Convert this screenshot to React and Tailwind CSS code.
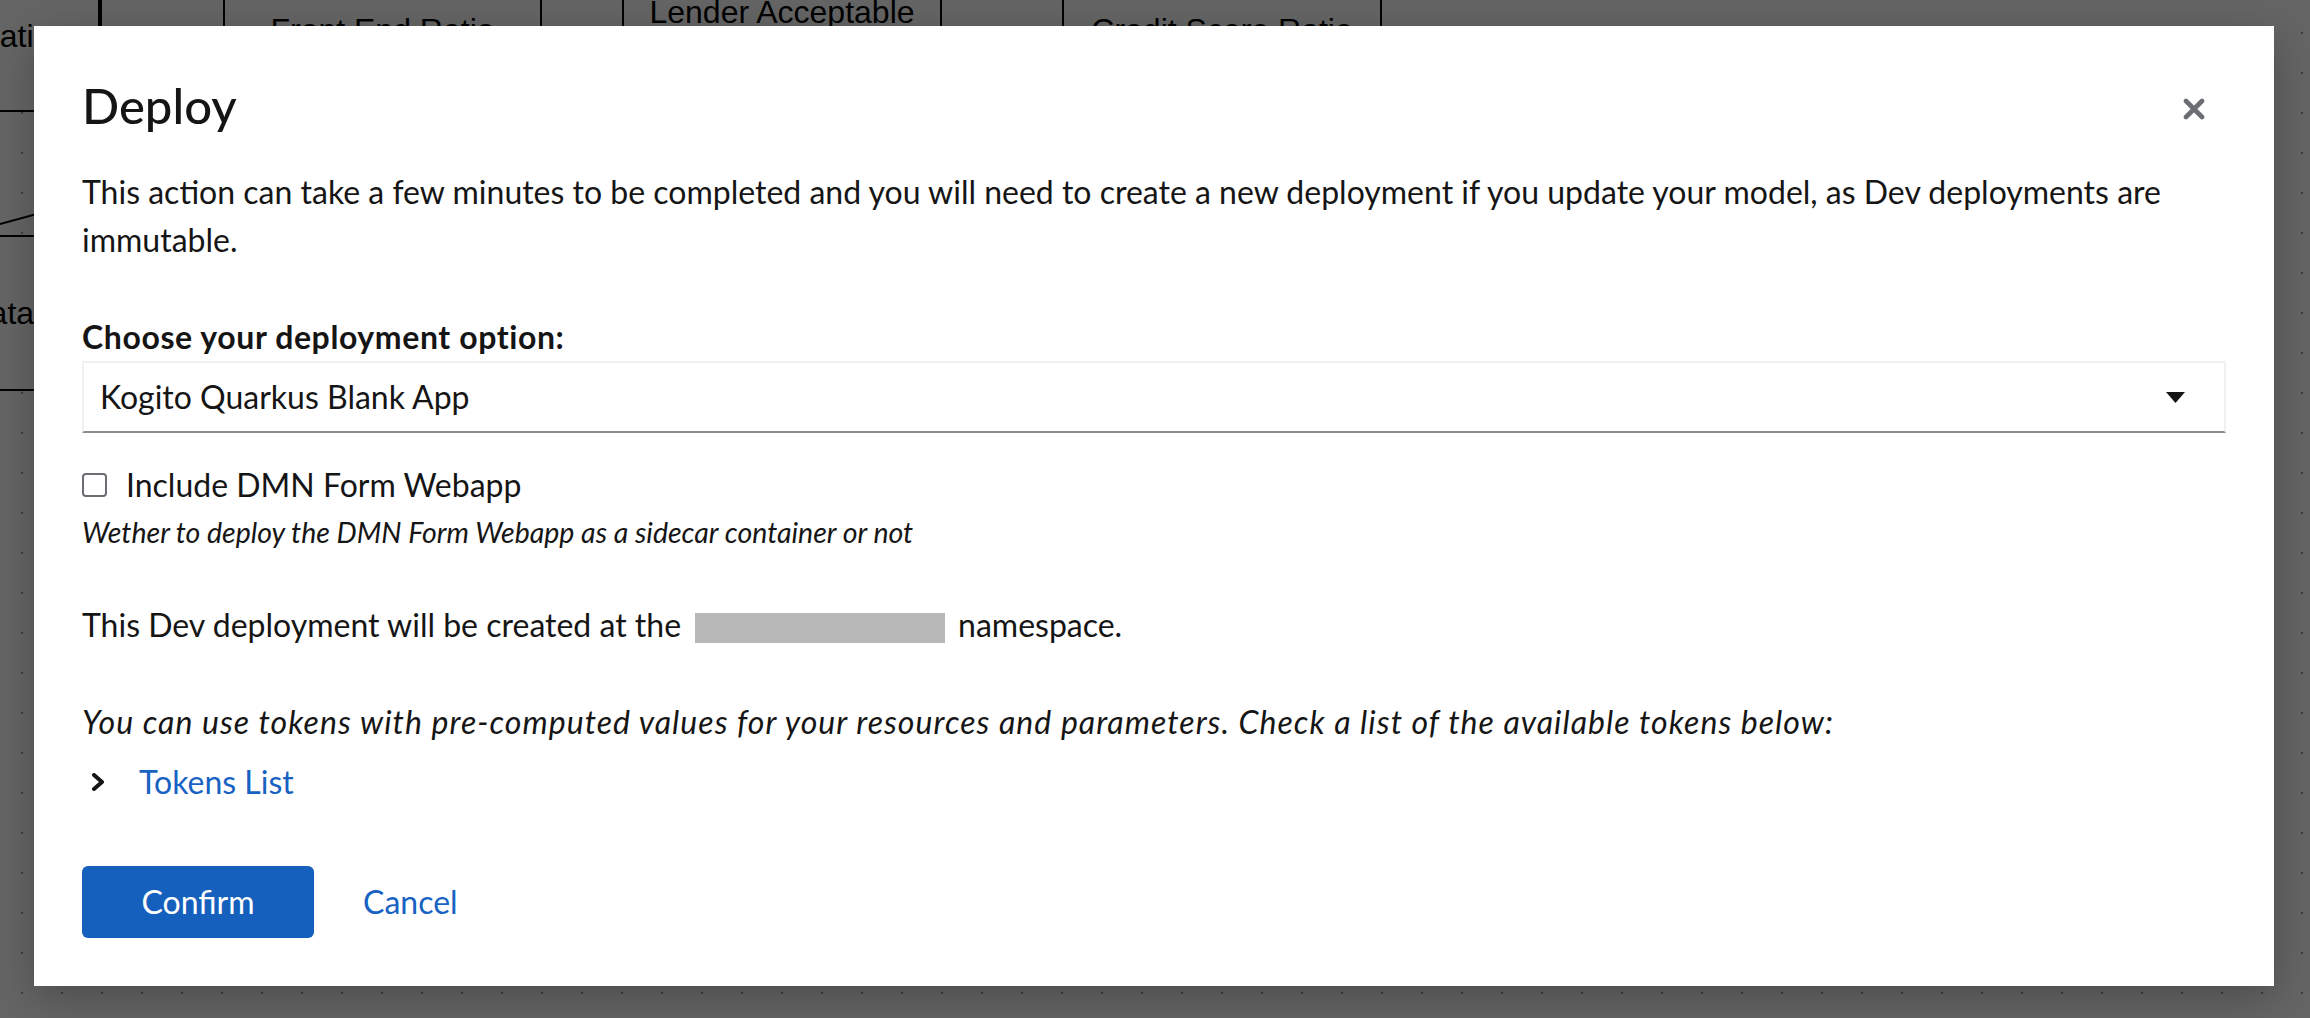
import { useState } from "react";

function CanvasNode({ className, label, labelClass }) {
  return (
    <div className={"absolute flex items-center justify-center border-2 border-black bg-white " + className}>
      <span className={"text-[32px] text-black whitespace-nowrap " + (labelClass || "")}>{label}</span>
    </div>
  );
}

function Backdrop() {
  return (
    <div className="absolute inset-0 bg-white bg-[radial-gradient(circle,#9a9a9a_1.2px,transparent_1.6px)] bg-[length:40px_40px] bg-[position:2px_13px] font-['Liberation_Sans',Arial,sans-serif]">
      {/* DMN graph behind the dialog */}
      <CanvasNode className="left-[-300px] top-[-40px] w-[400px] h-[152px]" label="Loan Calculation" labelClass="pl-[100px]" />
      <CanvasNode className="left-[-300px] top-[235px] w-[400px] h-[156px]" label="Applicant Data" labelClass="pl-[60px]" />
      <CanvasNode className="left-[223px] top-[-80px] w-[319px] h-[220px]" label="Front End Ratio" />
      <CanvasNode className="left-[622px] top-[-116px] w-[320px] h-[256px] rounded-l-[60px]" label="Lender Acceptable" />
      <CanvasNode className="left-[1062px] top-[-80px] w-[320px] h-[220px]" label="Credit Score Ratio" />
      <div className="absolute left-[100px] top-[-20px] h-[200px] w-[2px] bg-black" />
      <svg className="absolute left-0 top-[190px]" width="120" height="40">
        <line x1="0" y1="34" x2="110" y2="4" stroke="black" strokeWidth="2" />
      </svg>
      <div className="absolute inset-0 bg-[rgba(3,3,3,0.61)]" />
    </div>
  );
}

function CloseIcon() {
  return (
    <svg width="22" height="22" viewBox="0 0 22 22">
      <path d="M3 3 L19 19 M19 3 L3 19" stroke="#6a6e73" strokeWidth="4.6" strokeLinecap="round" />
    </svg>
  );
}

export default function App() {
  const [checked, setChecked] = useState(false);

  return (
    <div className="relative w-full h-screen overflow-hidden font-['Lato','Open_Sans',sans-serif] text-[#151515]">
      <Backdrop />

      <div className="relative pl-[34px] pt-[26px]">
        {/* Modal */}
        <div className="relative w-[2240px] bg-white p-[48px] shadow-[0_12px_40px_rgba(0,0,0,0.25)]">
          <button className="absolute right-[69px] top-[72px] w-[22px] h-[22px]">
            <CloseIcon />
          </button>

          <h1 className="text-[49px] leading-[62px] font-medium">Deploy</h1>

          <p className="mt-[32px] text-[32px] leading-[48px]">
            This action can take a few minutes to be completed and you will need to create a new deployment if you update
            your model, as Dev deployments are immutable.
          </p>

          <label className="block mt-[53px] text-[32px] leading-[40px] font-bold tracking-[0.6px]">
            Choose your deployment option:
          </label>
          <div className="mt-[4px] h-[72px] flex items-center justify-between pl-[16px] pr-[39px] border-2 border-[#f0f0f0] border-b-[#8a8d90]">
            <span className="text-[32px]">Kogito Quarkus Blank App</span>
            <svg width="19" height="11" viewBox="0 0 19 11">
              <path d="M0 0 H19 L9.5 11 Z" fill="#151515" />
            </svg>
          </div>

          <div className="mt-[28px] h-[48px] flex items-center">
            <span
              onClick={() => setChecked(!checked)}
              className="w-[25px] h-[24px] rounded-[4px] border-2 border-[#6a6e73] bg-white"
            />
            <span className="ml-[19px] text-[32px]">Include DMN Form Webapp</span>
          </div>
          <p className="mt-[2px] text-[28.5px] leading-[42px] italic">
            Wether to deploy the DMN Form Webapp as a sidecar container or not
          </p>

          <p className="mt-[48px] text-[32px] leading-[48px]">
            This Dev deployment will be created at the
            <span className="inline-block w-[250px] h-[30px] ml-[14px] mr-[13px] bg-[#b8b8b8] align-[-6px]" />
            namespace.
          </p>

          <p className="mt-[49px] text-[32px] leading-[48px] italic tracking-[1.05px]">
            You can use tokens with pre-computed values for your resources and parameters. Check a list of the available
            tokens below:
          </p>

          <div className="mt-[12px] h-[48px] flex items-center">
            <svg className="ml-[9px]" width="14" height="18" viewBox="0 0 14 18">
              <path d="M3 2 L11 9 L3 16" fill="none" stroke="#151515" strokeWidth="4" strokeLinecap="round" strokeLinejoin="round" />
            </svg>
            <span className="ml-[34px] text-[32px] text-[#1862c4]">Tokens List</span>
          </div>

          <div className="mt-[60px] flex items-center gap-[49px]">
            <button className="w-[232px] h-[72px] rounded-[6px] bg-[#1560bd] text-white text-[32px]">Confirm</button>
            <button className="text-[32px] text-[#1862c4]">Cancel</button>
          </div>
        </div>
      </div>
    </div>
  );
}
